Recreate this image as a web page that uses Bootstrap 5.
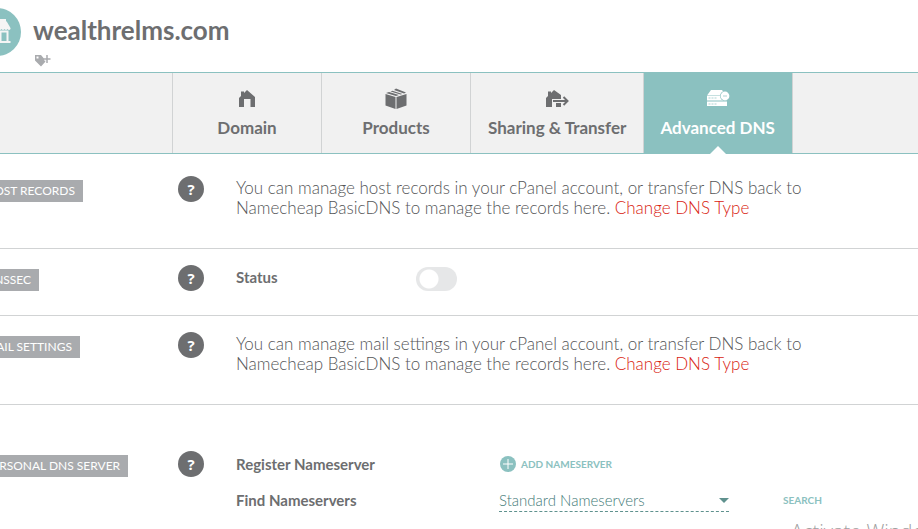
<!DOCTYPE html>
<html lang="en">
<head>
<meta charset="utf-8">
<meta name="viewport" content="width=device-width, initial-scale=1">
<title>wealthrelms.com - Advanced DNS</title>
<link href="https://cdn.jsdelivr.net/npm/bootstrap@5.3.0/dist/css/bootstrap.min.css" rel="stylesheet">
<style>
:root { --ink: #6d6e70; --teal: #8bc1c0; --line: #d1d3d4; --deep: #5f918e; }
body { font-family: Lato, "Open Sans", sans-serif; color: var(--ink); background: #fff; font-size: 17px; line-height: 20px; overflow: hidden; }
.domain-head { height: 72px; padding-top: 8px; }
.domain-logo { width: 48px; height: 48px; margin-left: -27px; }
.domain-title { font-size: 26px; line-height: 30px; font-weight: 700; margin: 7px 0 0; }
.tag-btn { display: block; line-height: 0; color: #a9abae; margin-top: 6px; }
.tabs { background: #f1f1f1; border-top: 1px solid var(--teal); border-bottom: 1px solid var(--teal); padding-left: 172px; }
.tab { min-width: 149px; height: 80px; padding: 15px 17px 0; border-left: 1px solid var(--line); color: var(--ink); font-weight: 700; text-align: center; text-decoration: none; }
.tab svg { display: block; margin: 0 auto 8px; }
.tab.active { background: var(--teal); color: #fff; padding-left: 16px; border-right: 1px solid var(--line); position: relative; }
.tab.active::after { content: ""; position: absolute; left: 50%; bottom: -1px; margin-left: -8px; border: 8px solid transparent; border-top: 0; border-bottom-color: #fff; }
.zone { border-bottom: 1px solid var(--line); padding: 16px 16px 24px 0; }
.zone.first { padding-top: 22px; }
.zone.last { padding-top: 46px; border-bottom: 0; }
.zone-name { width: 201px; margin-left: -23px; padding-top: 4px; line-height: 22px; }
.zone-name span { display: block; width: fit-content; background: #a9abae; color: #fff; font-size: 12px; padding: 0 8px; white-space: nowrap; }
.help { width: 26px; height: 26px; border: 0; padding: 0; border-radius: 50%; background: var(--ink); color: #fff; font: 700 15px/26px "Open Sans", sans-serif; }
.zone-body { margin-left: 32px; }
.note { max-width: 580px; padding: 2px 0 6px; margin: 0; font-weight: 300; color: #545557; }
.note a { color: #d91c10; text-decoration: none; }
.field-name { font-size: 15px; font-weight: 700; }
.status-name { width: 180px; padding-top: 2px; }
.form-check-input.toggle { width: 41px; height: 24px; margin: 2px 0 0; border: 0; background-color: #e6e7e8; background-size: 20px 20px; background-position: 3px center; background-repeat: no-repeat; background-image: radial-gradient(circle at center, #fff 9px, transparent 10px); }
.form-check-input.toggle:checked { background-color: var(--teal); background-position: 18px center; }
.status-row { height: 26px; }
.act { border: 0; background: none; padding: 0; color: var(--teal); font-size: 10px; font-weight: 700; }
.ns-name { width: 263px; }
.ns-list { gap: 10px; }
.ns-row { height: 26px; }
.ns-select { width: 230px; height: 24px; appearance: none; border: 0; border-bottom: 1px dashed var(--deep); border-radius: 0; padding: 0; color: #3f7a77; font-size: 15px; font-weight: 300; background: transparent; }
.picker { height: 24px; }
.picker svg { position: absolute; right: 0; top: 10px; pointer-events: none; }
.search { margin-left: 54px; }
.watermark { position: absolute; left: 791px; top: 518px; font: 300 20px/27px "Open Sans", sans-serif; color: #a0a0a0; white-space: nowrap; pointer-events: none; }
</style>
<script src="https://cdn.jsdelivr.net/npm/bootstrap@5.3.0/dist/js/bootstrap.bundle.min.js"></script>
</head>
<body>
<header class="domain-head d-flex">
  <svg class="domain-logo flex-shrink-0" viewBox="0 0 48 48" aria-hidden="true">
    <circle cx="24" cy="24" r="24" fill="#8bc1c0"/>
    <path fill="#f5f5f5" d="M17 11h16v2l1 1 3.500 6v1q-1.500 2-3 0-1.500 2-3 0-1.500 2-3 0-1.500 2-3 0-1.500 2-3 0-1.500 2-3 0-1.500 2-3 0-1.500 2-3 0-1.500 2-3 0v-1l3.500-6 1-1z"/>
    <path fill="none" stroke="#f5f5f5" stroke-width="2" d="M15 22v11M27.500 33v-9.500h7V33M11 34h26.500"/>
  </svg>
  <div class="ms-2 ps-1">
    <h1 class="domain-title">wealthrelms.com</h1>
    <button class="btn p-0 border-0 tag-btn" type="button" aria-label="Add tag">
      <svg width="20" height="18" viewBox="0 0 20 18"><path fill="currentColor" fill-rule="evenodd" d="M2 4h6l5 6-5 5.500L2 9.500zm1.500 1.500v2h2v-2z"/><path stroke="#fff" stroke-width="3" d="M14 3v9M11 8h8"/><path stroke="currentColor" stroke-width="1.500" d="M14 4v8M10.500 8H17.500"/></svg>
    </button>
  </div>
</header>
<nav class="tabs d-flex">
  <a class="tab" href="#domain"><svg width="20" height="22" viewBox="0 0 20 22"><path fill="currentColor" d="M2 19v-9l2-2V3.500h3V5l3-3 8 7v10h-4.500v-8H7v8z"/></svg>Domain</a>
  <a class="tab" href="#products"><svg width="22" height="22" viewBox="0 0 22 22"><path fill="currentColor" d="M.5 6 10.500 9v12L.5 17.500zM11.500 9l10-3v11.500L11.500 21zM1 5l3-1L14 7l-3 1zM5.500 3.500l2-.8L17.500 5.900l-2 .7zM9 2.100 11 .5l10 4-2 1z"/></svg>Products</a>
  <a class="tab" href="#sharing"><svg width="24" height="22" viewBox="0 0 24 22"><path fill="currentColor" d="M1 19v-9l2-2V3.500h3V5l3-3 7 5v4H7v8zM11 15h5v4h-5z"/><path fill="none" stroke="currentColor" stroke-width="2" d="M8 13h14M18.500 9l4 4-4 4"/></svg>Sharing &amp; Transfer</a>
  <a class="tab active" href="#dns" aria-current="page"><svg width="24" height="22" viewBox="0 0 24 22"><path fill="currentColor" d="M5 2h11l4 5.500H1zM1 8h20v4.500H1zM1 13.500h20V18H1z"/><circle cx="19" cy="8" r="5" fill="#8bc1c0"/><circle cx="19" cy="8" r="4.400" fill="currentColor"/><path fill="none" stroke="#8bc1c0" stroke-width=".7" d="M2.500 10h2m1 0h2m1 0h2M2.500 16h2m1 0h2m1 0h2M17 8h4"/></svg>Advanced DNS</a>
</nav>
<main>
  <section class="zone first d-flex">
    <div class="zone-name flex-shrink-0"><span>HOST RECORDS</span></div>
    <button class="help flex-shrink-0" type="button" aria-label="About host records">?</button>
    <div class="zone-body"><p class="note">You can manage host records in your cPanel account, or transfer DNS back to Namecheap BasicDNS to manage the records here. <a href="#change">Change DNS Type</a></p></div>
  </section>
  <section class="zone d-flex">
    <div class="zone-name flex-shrink-0"><span>DNSSEC</span></div>
    <button class="help flex-shrink-0" type="button" aria-label="About DNSSEC">?</button>
    <div class="zone-body status-row d-flex">
      <label class="field-name status-name" for="status">Status</label>
      <input class="form-check-input toggle rounded-pill" type="checkbox" role="switch" id="status">
    </div>
  </section>
  <section class="zone d-flex">
    <div class="zone-name flex-shrink-0"><span>MAIL SETTINGS</span></div>
    <button class="help flex-shrink-0" type="button" aria-label="About mail settings">?</button>
    <div class="zone-body"><p class="note">You can manage mail settings in your cPanel account, or transfer DNS back to Namecheap BasicDNS to manage the records here. <a href="#change">Change DNS Type</a></p></div>
  </section>
  <section class="zone last d-flex">
    <div class="zone-name flex-shrink-0"><span>PERSONAL DNS SERVER</span></div>
    <button class="help flex-shrink-0" type="button" aria-label="About personal DNS server">?</button>
    <div class="zone-body ns-list d-flex flex-column">
      <div class="ns-row d-flex align-items-center">
        <div class="field-name ns-name">Register Nameserver</div>
        <button class="act d-flex align-items-center gap-1" type="button"><svg width="18" height="18" viewBox="0 0 18 18"><circle cx="9" cy="9" r="8" fill="currentColor"/><path stroke="#fff" d="M9 4v10M4 9h10"/></svg>ADD NAMESERVER</button>
      </div>
      <div class="ns-row d-flex align-items-center">
        <label class="field-name ns-name" for="ns">Find Nameservers</label>
        <div class="picker position-relative">
          <select class="ns-select" id="ns"><option>Standard Nameservers</option><option>Custom Nameservers</option></select>
          <svg width="10" height="6" viewBox="0 0 10 6"><path fill="#5f918e" d="M0 0h10L5 5z"/></svg>
        </div>
        <button class="act search" type="button">SEARCH</button>
      </div>
    </div>
  </section>
</main>
<div class="watermark">Activate Windows</div>
</body>
</html>
